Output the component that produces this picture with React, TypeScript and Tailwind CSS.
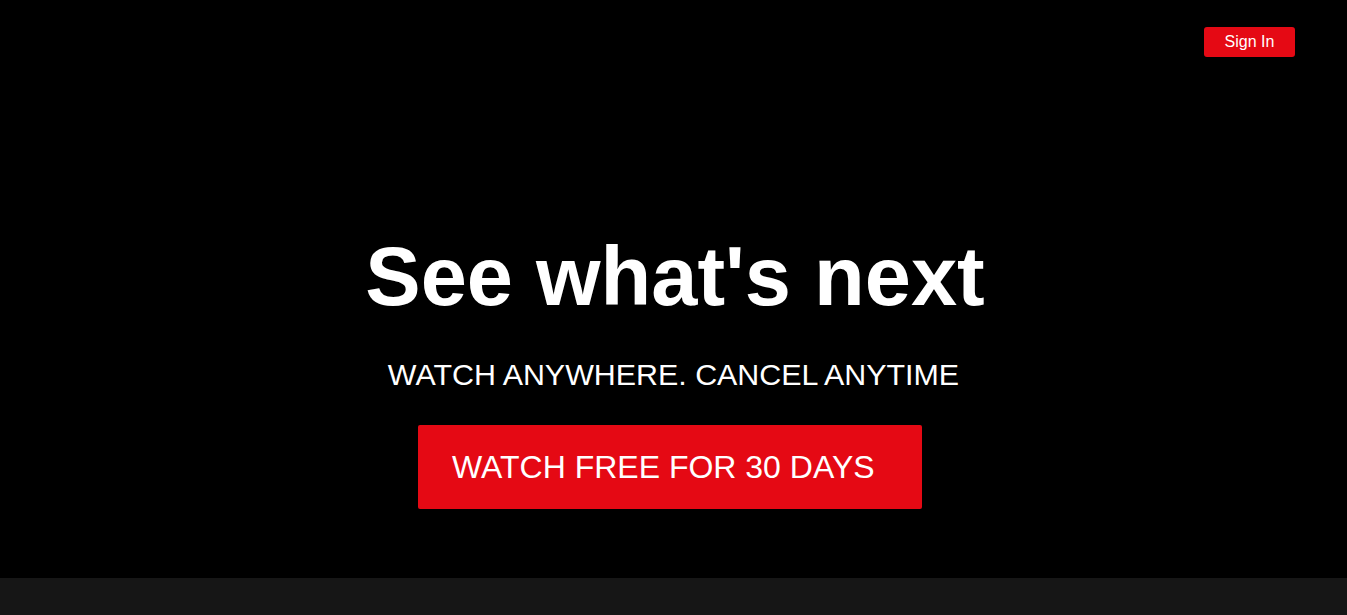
import React from "react";

export default function App() {
  return (
    <div className="w-full bg-[#161616]" style={{ fontFamily: '"Liberation Sans", Arial, sans-serif' }}>
      <section className="h-[578px] bg-black flex flex-col">
        <header className="flex justify-end pt-[27px] pr-[52px]">
          <button className="w-[91px] h-[30px] rounded-[3px] bg-[#e50914] text-white text-[16px] leading-none flex items-center justify-center">
            Sign In
          </button>
        </header>
        <div className="flex flex-col items-center mt-[178px]">
          <h1 className="text-white font-bold text-[83px] leading-[83px] ml-[3px]">See what's next</h1>
          <h3 className="text-white text-[30.4px] leading-[30px] mt-[41px]">WATCH ANYWHERE. CANCEL ANYTIME</h3>
          <button className="mt-[36px] mr-[7px] w-[504px] h-[84px] bg-[#e50914] rounded-[2px] text-white text-[32px] leading-none flex items-center pl-[34px]">
            WATCH FREE FOR 30 DAYS
          </button>
        </div>
      </section>
      <section className="h-[37px] bg-[#161616]" />
    </div>
  );
}
